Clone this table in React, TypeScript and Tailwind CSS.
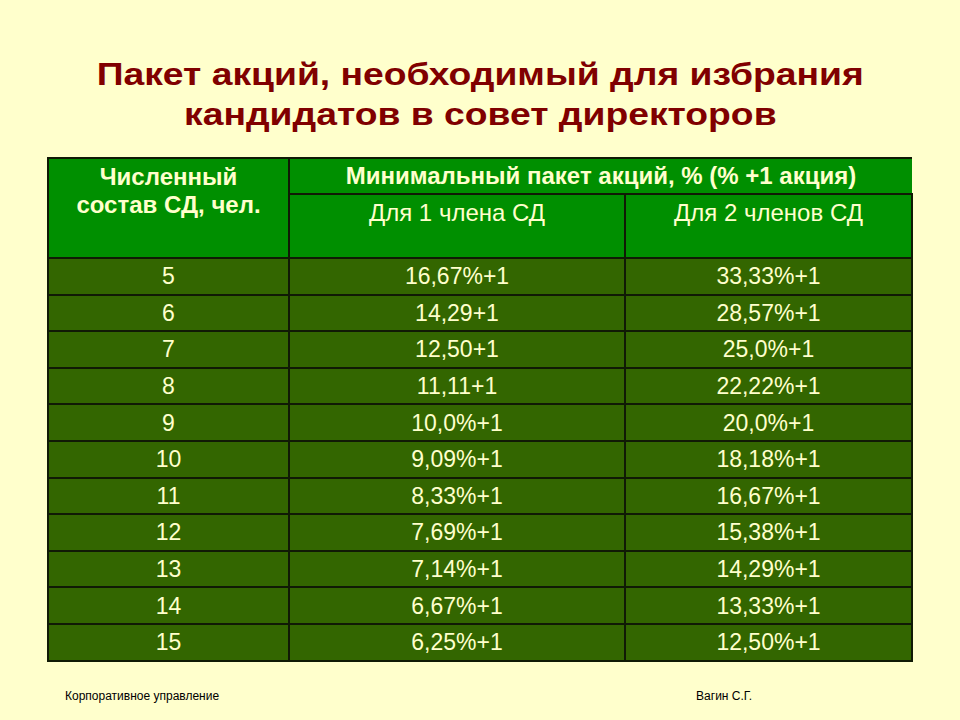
const rows: [string, string, string][] = [
  ["5", "16,67%+1", "33,33%+1"],
  ["6", "14,29+1", "28,57%+1"],
  ["7", "12,50+1", "25,0%+1"],
  ["8", "11,11+1", "22,22%+1"],
  ["9", "10,0%+1", "20,0%+1"],
  ["10", "9,09%+1", "18,18%+1"],
  ["11", "8,33%+1", "16,67%+1"],
  ["12", "7,69%+1", "15,38%+1"],
  ["13", "7,14%+1", "14,29%+1"],
  ["14", "6,67%+1", "13,33%+1"],
  ["15", "6,25%+1", "12,50%+1"],
];

export default function App() {
  return (
    <div
      className="w-[960px] h-[720px] bg-[#ffffcc] flex flex-col overflow-hidden"
      style={{ fontFamily: '"Liberation Sans", Arial, sans-serif' }}
    >
      <h1 className="mt-[54px] flex flex-col items-center text-[32px] leading-[40px] font-bold text-[#800000]">
        <span className="inline-block scale-x-[1.165]">Пакет акций, необходимый для избрания</span>
        <span className="inline-block scale-x-[1.165]">кандидатов в совет директоров</span>
      </h1>

      <div className="mt-[23px] ml-[47px] w-[866px]">
        <table className="w-full border-collapse text-[#ffffcc] table-fixed">
          <colgroup>
            <col className="w-[241px]" />
            <col className="w-[336px]" />
            <col />
          </colgroup>
          <thead>
            <tr className="h-[36px] bg-[#008f00]">
              <th
                rowSpan={2}
                className="border-2 border-[#101a05] align-top pt-[4px] text-[24px] leading-[28px] font-bold"
              >
                Численный
                <br />
                состав СД, чел.
              </th>
              <th
                colSpan={2}
                className="border-t-2 border-l-2 border-[#101a05] p-0 text-[24px] leading-[28px] font-bold"
              >
                Минимальный пакет акций, % (% +1 акция)
              </th>
            </tr>
            <tr className="h-[64px] bg-[#008f00]">
              <td className="border-2 border-[#101a05] align-top pt-[3px] text-center text-[24px] leading-[30px]">
                Для 1 члена СД
              </td>
              <td className="border-2 border-[#101a05] align-top pt-[3px] text-center text-[24px] leading-[30px]">
                Для 2 членов СД
              </td>
            </tr>
          </thead>
          <tbody>
            {rows.map(([n, a, b]) => (
              <tr key={n} className="h-[36.6px] bg-[#336600] text-[23px] leading-[28px] text-center">
                <td className="border-2 border-[#101a05] p-0">{n}</td>
                <td className="border-2 border-[#101a05] p-0">{a}</td>
                <td className="border-2 border-[#101a05] p-0">{b}</td>
              </tr>
            ))}
          </tbody>
        </table>
      </div>

      <div className="mt-[25px] flex text-[12px] text-black">
        <span className="ml-[65px]">Корпоративное управление</span>
        <span className="ml-[477px]">Вагин С.Г.</span>
      </div>
    </div>
  );
}
